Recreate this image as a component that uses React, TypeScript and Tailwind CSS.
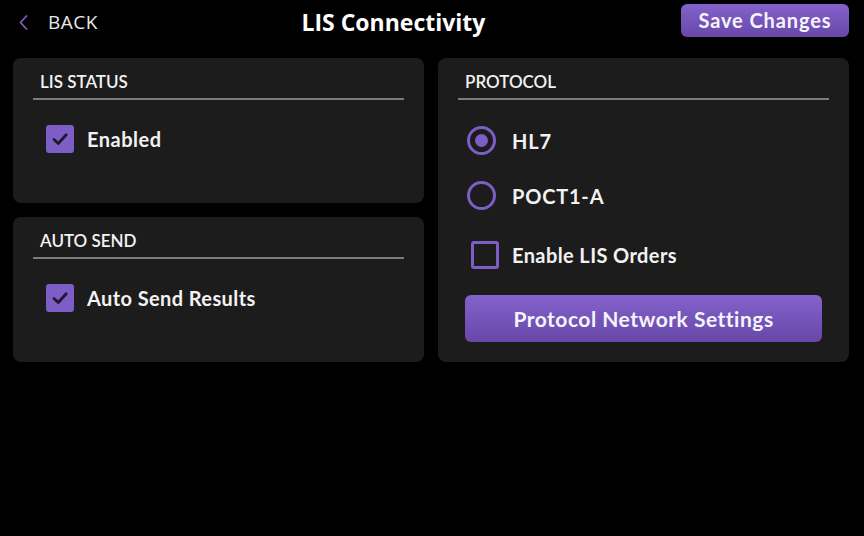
import React, { useState } from 'react';

const font = { fontFamily: 'Lato, "Open Sans", sans-serif' };

function CheckBox({ checked }: { checked: boolean }) {
  return checked ? (
    <div className="w-[28px] h-[28px] rounded-[3px] bg-[#7d5dc6] flex items-center justify-center shrink-0">
      <svg width="28" height="28" viewBox="0 0 28 28" fill="none">
        <path d="M8 14.5 L12.2 18.5 L20.2 9.8" stroke="#1f1a2a" strokeWidth="2.8" strokeLinecap="round" strokeLinejoin="round" />
      </svg>
    </div>
  ) : (
    <div className="w-[28px] h-[28px] rounded-[3px] border-[3px] border-[#7d5dc6] shrink-0" />
  );
}

function Radio({ checked }: { checked: boolean }) {
  return (
    <div className="w-[29px] h-[29px] rounded-full border-[3px] border-[#7d5dc6] flex items-center justify-center shrink-0">
      {checked && <div className="w-[13px] h-[13px] rounded-full bg-[#7d5dc6]" />}
    </div>
  );
}

function PanelHeader({ title }: { title: string }) {
  return (
    <div>
      <div className="px-[7px] pt-[12px] h-[36px] text-[17px] leading-[24px] font-semibold text-[#f2f2f2]">{title}</div>
      <div className="h-[2px] bg-[#7c7c7c] mt-[4px]" />
    </div>
  );
}

export default function App() {
  const [protocol, setProtocol] = useState('HL7');

  return (
    <div className="w-[864px] h-[536px] bg-black text-white overflow-hidden" style={font}>
      {/* Header */}
      <div className="h-[58px] flex items-start justify-between pl-[19px] pr-[15px]">
        <div className="flex items-center h-[44px] gap-[20px] text-[#e8e8e8]">
          <svg width="9" height="15" viewBox="0 0 9 15" fill="none">
            <path d="M7.5 1 L1.5 7.5 L7.5 14" stroke="#7d5dc6" strokeWidth="1.8" strokeLinecap="round" strokeLinejoin="round" />
          </svg>
          <span className="text-[19px] tracking-[0.5px]" style={{ fontFamily: '"Open Sans", sans-serif' }}>BACK</span>
        </div>
        <div
          className="h-[44px] flex items-center text-[23px] font-bold text-white ml-[8px]"
          style={{ fontFamily: '"Open Sans", Lato, sans-serif' }}
        >
          LIS Connectivity
        </div>
        <button className="mt-[4px] w-[168px] h-[33px] rounded-[6px] bg-gradient-to-b from-[#8462cc] to-[#6748a8] text-[20px] leading-[33px] font-bold tracking-[0.9px] text-[#f6f4fb]">
          Save Changes
        </button>
      </div>

      {/* Panels */}
      <div className="grid grid-cols-[411px_411px] gap-[14px] pl-[13px]">
        <div className="flex flex-col gap-[14px]">
          <div className="h-[145px] bg-[#1c1c1c] rounded-[8px] px-[20px]">
            <PanelHeader title="LIS STATUS" />
            <div className="mt-[25px] ml-[13px] flex items-center gap-[13px]">
              <CheckBox checked />
              <span className="text-[20px] leading-[28px] font-bold tracking-[0.5px] text-[#f2f2f2]">Enabled</span>
            </div>
          </div>
          <div className="h-[145px] bg-[#1c1c1c] rounded-[8px] px-[20px]">
            <PanelHeader title="AUTO SEND" />
            <div className="mt-[25px] ml-[13px] flex items-center gap-[13px]">
              <CheckBox checked />
              <span className="text-[20px] leading-[28px] font-bold tracking-[0.4px] text-[#f2f2f2]">Auto Send Results</span>
            </div>
          </div>
        </div>

        <div className="h-[304px] bg-[#1c1c1c] rounded-[8px] px-[20px]">
          <PanelHeader title="PROTOCOL" />
          <div className="flex flex-col">
            {['HL7', 'POCT1-A'].map((p) => (
              <div
                key={p}
                onClick={() => setProtocol(p)}
                className="mt-[26px] ml-[9px] flex items-center gap-[16px] cursor-pointer"
              >
                <Radio checked={protocol === p} />
                <span className="text-[20px] leading-[28px] font-bold tracking-[0.8px] text-[#f2f2f2]">{p}</span>
              </div>
            ))}
            <div className="mt-[31px] ml-[13px] flex items-center gap-[13px]">
              <CheckBox checked={false} />
              <span className="text-[20px] leading-[28px] font-bold tracking-[0.4px] text-[#f2f2f2]">Enable LIS Orders</span>
            </div>
            <button className="mt-[26px] mx-[7px] h-[47px] rounded-[6px] bg-gradient-to-b from-[#8462cc] to-[#6748a8] text-[21px] font-bold tracking-[0.5px] text-[#f6f4fb]">
              Protocol Network Settings
            </button>
          </div>
        </div>
      </div>
    </div>
  );
}
